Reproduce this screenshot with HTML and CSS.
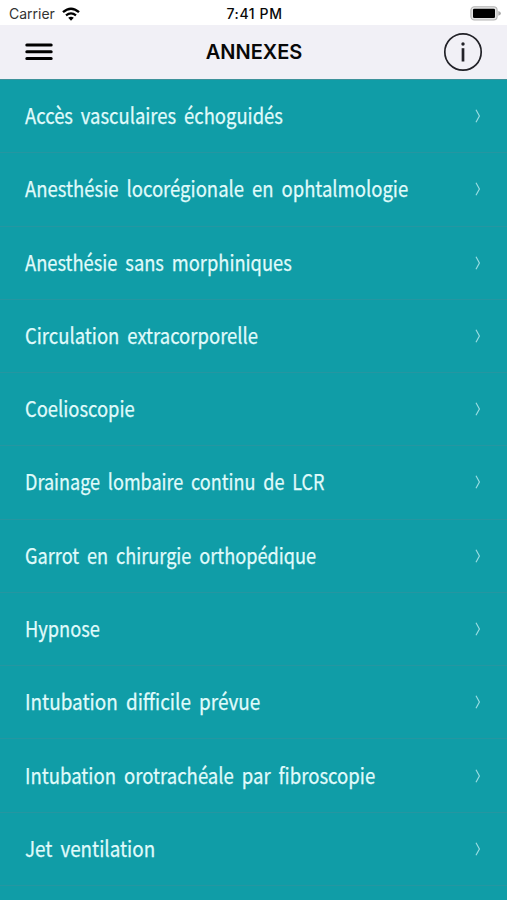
FILE: index.html
```html
<!DOCTYPE html>
<html lang="fr">
<head>
<meta charset="utf-8">
<title>Annexes</title>
<link rel="stylesheet" href="styles.css">
</head>
<body>
<div class="status">
  <div class="carrier"><span>Carrier</span>
    <svg class="wifi" viewBox="0 0 18 14" width="18" height="14"><path d="M1 5.2Q9-1.9 17 5.2" fill="none" stroke="#000" stroke-width="2.4"/><path d="M4 8.4Q9 4.2 14 8.4" fill="none" stroke="#000" stroke-width="2.2"/><path d="M6.2 10.8Q9 8.6 11.8 10.8L9 13.7Z"/></svg>
  </div>
  <time>7:41 PM</time>
  <svg class="battery" viewBox="0 0 31 15" width="31" height="15"><rect x=".9" y=".8" width="26.2" height="13.2" rx="3.5" fill="#e5e5e5" stroke="#b4b4b4" stroke-width="1.1"/><rect x="3" y="2.8" width="22" height="9.2" rx="1.3"/><path d="M28.3 5Q31 6 31 7.4T28.3 9.8Z" fill="#aaa"/></svg>
</div>
<header class="bar">
  <svg class="menu" viewBox="0 0 28 18" width="28" height="18"><path d="M1.8 2H26.2M1.8 8.8H26.2M1.8 15.4H26.2" stroke="#000" stroke-width="3" stroke-linecap="round"/></svg>
  <h1>ANNEXES</h1>
  <svg class="info" viewBox="0 0 40 40" width="40" height="40"><circle cx="20" cy="20" r="18.2" fill="none" stroke="#222228" stroke-width="1.7"/><circle cx="20" cy="12" r="1.7" fill="#222228"/><path d="M20 16.2V29.5" stroke="#222228" stroke-width="2.7"/></svg>
</header>
<ul class="list">
  <li><span style="--fit:.838">Accès vasculaires échoguidés</span><svg viewBox="0 0 6 14"><path d="M1 .8L4.4 7 1 13.2"/></svg></li>
  <li><span style="--fit:.841">Anesthésie locorégionale en ophtalmologie</span><svg viewBox="0 0 6 14"><path d="M1 .8L4.4 7 1 13.2"/></svg></li>
  <li><span style="--fit:.832">Anesthésie sans morphiniques</span><svg viewBox="0 0 6 14"><path d="M1 .8L4.4 7 1 13.2"/></svg></li>
  <li><span style="--fit:.84">Circulation extracorporelle</span><svg viewBox="0 0 6 14"><path d="M1 .8L4.4 7 1 13.2"/></svg></li>
  <li><span style="--fit:.835">Coelioscopie</span><svg viewBox="0 0 6 14"><path d="M1 .8L4.4 7 1 13.2"/></svg></li>
  <li><span style="--fit:.82">Drainage lombaire continu de LCR</span><svg viewBox="0 0 6 14"><path d="M1 .8L4.4 7 1 13.2"/></svg></li>
  <li><span style="--fit:.826">Garrot en chirurgie orthopédique</span><svg viewBox="0 0 6 14"><path d="M1 .8L4.4 7 1 13.2"/></svg></li>
  <li><span style="--fit:.829">Hypnose</span><svg viewBox="0 0 6 14"><path d="M1 .8L4.4 7 1 13.2"/></svg></li>
  <li><span style="--fit:.86">Intubation difficile prévue</span><svg viewBox="0 0 6 14"><path d="M1 .8L4.4 7 1 13.2"/></svg></li>
  <li><span style="--fit:.843">Intubation orotrachéale par fibroscopie</span><svg viewBox="0 0 6 14"><path d="M1 .8L4.4 7 1 13.2"/></svg></li>
  <li><span style="--fit:.855">Jet ventilation</span><svg viewBox="0 0 6 14"><path d="M1 .8L4.4 7 1 13.2"/></svg></li>
</ul>
</body>
</html>
```
FILE: styles.css
```css
* { box-sizing: border-box; }
body { margin: 0; height: 900px; overflow: hidden; background: #109da7; font-family: Inter, sans-serif; color: #080808; }
svg { display: block; flex: none; }
.status { height: 25px; padding: 2px 6px 0 9px; background: #fff; display: grid; grid-template-columns: 1fr auto 1fr; align-items: center; font-size: 14px; }
.carrier { display: flex; align-items: center; gap: 7px; color: #333; }
.carrier span { line-height: 17px; }
.status time { font-weight: 500; font-size: 14px; letter-spacing: .6px; margin-right: 1px; }
.battery { justify-self: end; }
.bar { height: 54px; padding: 0 24px 0 25px; background: #f1f0f6; display: grid; grid-template-columns: 1fr auto 1fr; align-items: center; }
.bar h1 { margin: 0; font-size: 20px; font-weight: 600; line-height: 24px; }
.info { justify-self: end; }
.list { margin: 0; padding: 0; list-style: none; border-top: 1px solid #3d929b; }
.list li { height: 73.27px; padding: 0 26px 0 25px; display: flex; align-items: center; justify-content: space-between; border-bottom: 1px solid #2596a1; }
.list span { flex: none; padding-bottom: 4px; color: #e0fbfb; font: 400 22px/30px "Noto Sans CJK SC", sans-serif; -webkit-text-stroke: .25px #e0fbfb; word-spacing: 4.5px; white-space: nowrap; transform: scaleX(var(--fit)); transform-origin: left; }
.list svg { width: 6px; height: 14px; margin-left: -20px; fill: none; stroke: #98dce2; stroke-width: 1.2; }
```
